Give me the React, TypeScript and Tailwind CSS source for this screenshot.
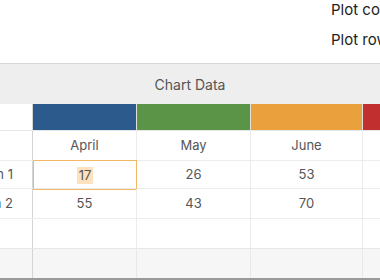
const font = { fontFamily: "Inter, 'Noto Sans', sans-serif" };

const cols = [
  { w: "w-[104px]", color: "bg-[#2d5a8c]", name: "April", a: "17", b: "55" },
  { w: "w-[114px]", color: "bg-[#5b9446]", name: "May", a: "26", b: "43" },
  { w: "w-[112px]", color: "bg-[#eaa03c]", name: "June", a: "53", b: "70" },
  { w: "w-[60px]", color: "bg-[#c1302f]", name: "July", a: "", b: "" },
];

function RowHead({ text, className = "" }: { text: string; className?: string }) {
  return (
    <div
      className={`w-[33px] shrink-0 flex justify-end items-center overflow-hidden whitespace-nowrap pr-[19px] border-r border-[#d4d4d4] ${className}`}
    >
      {text}
    </div>
  );
}

export default function App() {
  return (
    <div className="w-[380px] h-[280px] overflow-hidden bg-white flex flex-col text-[13px] text-[#555]" style={font}>
      <div className="h-[63px] flex flex-col items-start pl-[331px] text-[15px] text-[#222] whitespace-nowrap">
        <div className="mt-[1px] h-[18px] leading-[18px]">Plot columns</div>
        <div className="mt-[12px] h-[18px] leading-[18px]">Plot rows</div>
      </div>
      <div className="h-[41px] shrink-0 border-t border-[#d6d6d6] bg-[#eeeeee] flex items-center justify-center text-[14px] text-[#555]">
        Chart Data
      </div>

      <div className="flex h-[27px] shrink-0 border-b border-[#e6e6e6]">
        <RowHead text="" className="bg-white" />
        {cols.map((c) => (
          <div key={c.name} className={`${c.w} shrink-0 ${c.color} border-r border-[#e0e0e0]`} />
        ))}
      </div>

      <div className="flex h-[30px] shrink-0 border-b border-[#ececec]">
        <RowHead text="" />
        {cols.map((c) => (
          <div key={c.name} className={`${c.w} shrink-0 flex items-center justify-center border-r border-[#ececec]`}>
            {c.name === "July" ? "" : c.name}
          </div>
        ))}
      </div>

      <div className="flex h-[28px] shrink-0 border-b border-[#ececec]">
        <RowHead text="Region 1" />
        {cols.map((c, i) => (
          <div
            key={c.name}
            className={`${c.w} shrink-0 flex items-center justify-center border-r ${
              i === 0 ? "border border-[#f3b866] -mt-px -mb-px h-[30px]" : "border-[#ececec]"
            }`}
          >
            {i === 0 ? <span className="bg-[#fde2bd] px-[2px] leading-[17px]">{c.a}</span> : c.a}
          </div>
        ))}
      </div>

      <div className="flex h-[30px] shrink-0 border-b border-[#ececec]">
        <RowHead text="Region 2" />
        {cols.map((c) => (
          <div key={c.name} className={`${c.w} shrink-0 flex items-center justify-center border-r border-[#ececec]`}>
            {c.b}
          </div>
        ))}
      </div>

      <div className="flex h-[30px] shrink-0 border-b border-[#e6e6e6]">
        <RowHead text="" />
        {cols.map((c) => (
          <div key={c.name} className={`${c.w} shrink-0 border-r border-[#ececec]`} />
        ))}
      </div>

      <div className="flex h-[29px] shrink-0 bg-[#f6f6f6]">
        <RowHead text="" />
        {cols.map((c) => (
          <div key={c.name} className={`${c.w} shrink-0 border-r border-[#e8e8e8]`} />
        ))}
      </div>
      <div className="flex-1 bg-[#9a9a9a]" />
    </div>
  );
}
